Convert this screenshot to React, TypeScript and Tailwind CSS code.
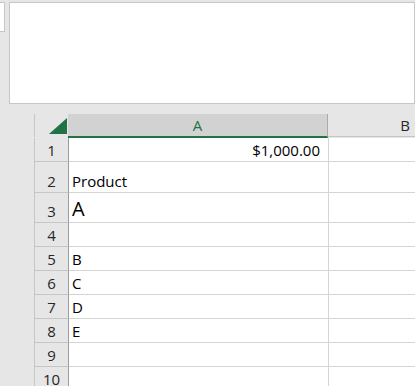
import React from "react";

interface Row {
  n: number;
  h: string;
  value?: string;
  big?: boolean;
  right?: boolean;
}

const rows: Row[] = [
  { n: 1, h: "h-[24px]", value: "$1,000.00", right: true },
  { n: 2, h: "h-[31px]", value: "Product" },
  { n: 3, h: "h-[30px]", value: "A", big: true },
  { n: 4, h: "h-[24px]" },
  { n: 5, h: "h-[24px]", value: "B" },
  { n: 6, h: "h-[24px]", value: "C" },
  { n: 7, h: "h-[24px]", value: "D" },
  { n: 8, h: "h-[24px]", value: "E" },
  { n: 9, h: "h-[24px]" },
  { n: 10, h: "h-[24px]" },
];

const App: React.FC = () => {
  return (
    <div className="w-[415px] h-[386px] overflow-hidden bg-[#e6e6e6] font-['Open_Sans',sans-serif] text-black">
      {/* formula / ribbon area */}
      <div className="flex pt-[2px] gap-[4px] h-[114px]">
        <div className="w-[6px] h-[30px] ml-[-1px] bg-white border border-[#c6c6c6]" />
        <div className="w-[420px] h-[102px] bg-white border border-[#c6c6c6]" />
      </div>

      {/* sheet */}
      <div className="ml-[34px] w-[520px]">
        <div className="flex h-[24px]">
          <div className="relative w-[34px] h-[23px] border-l border-[#c6c6c6] bg-[#e6e6e6]">
            <svg className="absolute left-[14px] top-[4px]" width="18" height="16" viewBox="0 0 18 16">
              <polygon points="18,0 18,16 0,16" fill="#217346" />
            </svg>
          </div>
          <div className="w-[260px] h-[24px] bg-[#d2d2d2] border-r border-[#ababab] border-b-2 border-b-[#217346] flex items-end justify-center pb-[1px] text-[15px] leading-[20px] text-[#217346]">
            A
          </div>
          <div className="w-[154px] h-[23px] bg-[#e6e6e6] border-b border-[#c6c6c6] flex items-end justify-center pb-[1px] text-[15px] leading-[20px] text-[#262626]">
            B
          </div>
        </div>

        {rows.map((r) => (
          <div key={r.n} className={`flex ${r.h}`}>
            <div className="w-[35px] h-full bg-[#e6e6e6] border-l border-l-[#c6c6c6] border-r border-r-[#9b9b9b] border-b border-b-[#c6c6c6] flex items-end justify-center pb-[1px] text-[15px] leading-[20px] text-[#262626]">
              {r.n}
            </div>
            <div
              className={
                r.right
                  ? "w-[260px] h-full bg-white border-r border-b border-[#d4d4d4] flex items-end justify-end pr-[8px] pb-[1px] text-[15px] leading-[20px]"
                  : r.big
                  ? "w-[260px] h-full bg-white border-r border-b border-[#d4d4d4] flex items-end pl-[3px] pb-[0px] text-[20px] leading-[26px]"
                  : "w-[260px] h-full bg-white border-r border-b border-[#d4d4d4] flex items-end pl-[3px] pb-[1px] text-[15px] leading-[20px]"
              }
            >
              {r.value}
            </div>
            <div className="w-[154px] h-full bg-white border-b border-[#d4d4d4]" />
          </div>
        ))}
      </div>
    </div>
  );
};

export default App;
